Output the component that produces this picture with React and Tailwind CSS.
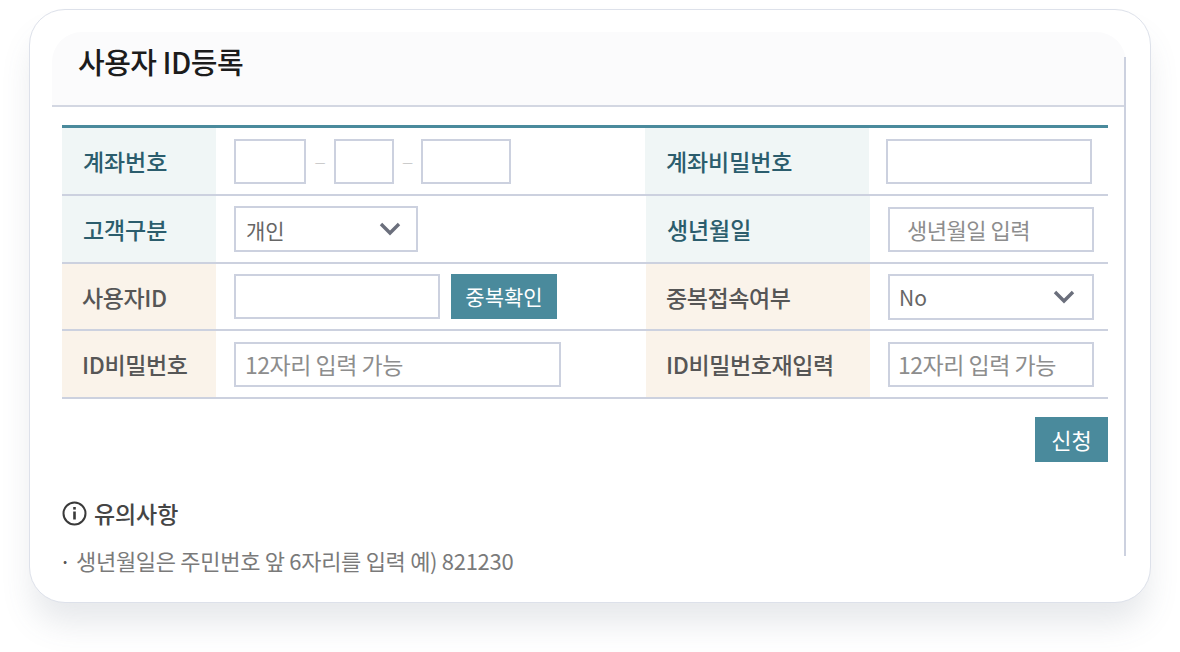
const font = "font-['Noto_Sans_CJK_KR','Noto_Sans',sans-serif]";

const Label = ({ tone, className = "", children }) => (
    <div
        className={`flex w-[224px] items-center pt-[1px] text-[23px] font-medium ${
            tone === "teal"
                ? "bg-[#f0f6f6] pl-[21px] tracking-[-0.1px] text-[#2b5d6d]"
                : "bg-[#faf3ea] pl-[20px] tracking-[-0.4px] text-[#565656]"
        } ${className}`}
    >
        {children}
    </div>
);

const Box = ({ className = "", placeholder }) => (
    <input
        type="text"
        placeholder={placeholder}
        className={`h-[45px] border-2 border-[#ccd1df] bg-white tracking-[-0.5px] outline-none placeholder:text-[#8d8d8d] ${className}`}
    />
);

const Chevron = () => (
    <svg width="22" height="14" viewBox="0 0 22 14" fill="none" stroke="#6b6f7c" strokeWidth="3.4">
        <path d="M2 2l9 9 9-9" />
    </svg>
);

const Select = ({ className = "", value }) => (
    <div className={`flex h-[46px] items-center justify-between border-2 border-[#ccd1df] bg-white text-[21px] text-[#666] ${className}`}>
        <span className="pt-[3px]">{value}</span>
        <Chevron />
    </div>
);

const Dash = ({ className = "" }) => <span className={`pt-[2px] text-center text-[12px] text-[#c2c2c2] ${className}`}>—</span>;

const Row = ({ className = "h-[68px]", children }) => (
    <div className={`flex border-b-2 border-[#ccd1df] ${className}`}>{children}</div>
);

const Cell = ({ className = "", children }) => (
    <div className={`flex items-center ${className}`}>{children}</div>
);

const InfoIcon = () => (
    <svg width="25" height="25" viewBox="0 0 25 25" fill="none" stroke="#3a3a3a" strokeWidth="2">
        <circle cx="12.5" cy="12.5" r="11" />
        <path d="M12.5 10.5v8" strokeWidth="2.6" />
        <path d="M12.5 6v2.6" strokeWidth="2.6" />
    </svg>
);

export default function App() {
    return (
        <div className={`h-[652px] w-[1180px] overflow-hidden bg-white pl-[29px] pt-[9px] ${font}`}>
            <div className="h-[594px] w-[1122px] rounded-[36px] border border-[#dde1ea] bg-white pl-[22px] pt-[22px] shadow-[0_24px_32px_-4px_rgba(90,100,120,0.15)]">
                <div className="relative h-[524px] w-[1074px]">
                    {/* right rule starts below the rounded header corner */}
                    <div className="absolute bottom-0 right-0 top-[25px] w-[2px] bg-[#ccd1df]" />
                    <div className="flex h-[75px] items-start rounded-t-[30px] border-b-2 border-[#d3d7e2] bg-[#fbfbfc] pl-[26px] pt-[8px] text-[29px] font-medium tracking-[-0.5px] text-[#1c1c1c]">
                        사용자 ID등록
                    </div>
                    <div className="w-[1056px] pl-[10px] pt-[18px]">
                        <div className="w-[1046px] border-t-[3px] border-[#4a8a9c]">
                            <Row>
                                <Label tone="teal" className="!w-[154px]">계좌번호</Label>
                                <Cell className="w-[429px] pl-[18px]">
                                    <Box className="w-[72px]" />
                                    <Dash className="w-[28px]" />
                                    <Box className="w-[60px]" />
                                    <Dash className="w-[27px]" />
                                    <Box className="w-[90px]" />
                                </Cell>
                                <Label tone="teal">계좌비밀번호</Label>
                                <Cell className="pl-[17px]"><Box className="w-[206px]" /></Cell>
                            </Row>
                            <Row>
                                <Label tone="teal" className="!w-[154px]">고객구분</Label>
                                <Cell className="w-[430px] pl-[18px]"><Select className="w-[184px] pl-[10px] pr-[15px]" value="개인" /></Cell>
                                <Label tone="teal">생년월일</Label>
                                <Cell className="pl-[18px]"><Box className="w-[206px] pl-[17px] text-[22px]" placeholder="생년월일 입력" /></Cell>
                            </Row>
                            <Row className="h-[67px]">
                                <Label tone="orange" className="!w-[154px]">사용자ID</Label>
                                <Cell className="w-[430px] pl-[18px]">
                                    <Box className="w-[206px]" />
                                    <button className="ml-[11px] h-[45px] w-[106px] bg-[#4a8a9c] text-[21px] text-white">중복확인</button>
                                </Cell>
                                <Label tone="orange">중복접속여부</Label>
                                <Cell className="pl-[18px]"><Select className="w-[206px] pl-[9px] pr-[17px]" value="No" /></Cell>
                            </Row>
                            <Row>
                                <Label tone="orange" className="!w-[154px]">ID비밀번호</Label>
                                <Cell className="w-[430px] pl-[18px]"><Box className="w-[327px] pl-[9px] text-[23px]" placeholder="12자리 입력 가능" /></Cell>
                                <Label tone="orange">ID비밀번호재입력</Label>
                                <Cell className="pl-[18px]"><Box className="w-[206px] pl-[8px] text-[23px]" placeholder="12자리 입력 가능" /></Cell>
                            </Row>
                        </div>
                        <div className="mt-[18px] flex justify-end">
                            <button className="h-[45px] w-[73px] bg-[#4a8a9c] text-[22px] text-white">신청</button>
                        </div>
                        <div className="mt-[34px] flex items-center gap-[7px] text-[23px] font-medium tracking-[-0.1px] text-[#454545]">
                            <InfoIcon />
                            유의사항
                        </div>
                        <div className="mt-[13px] flex items-center text-[22px] tracking-[-0.3px] text-[#7a7a7a]">
                            <span className="w-[14px] -translate-x-[3px] text-[#555]">·</span>
                            생년월일은 주민번호 앞 6자리를 입력 예) 821230
                        </div>
                    </div>
                </div>
            </div>
        </div>
    );
}
